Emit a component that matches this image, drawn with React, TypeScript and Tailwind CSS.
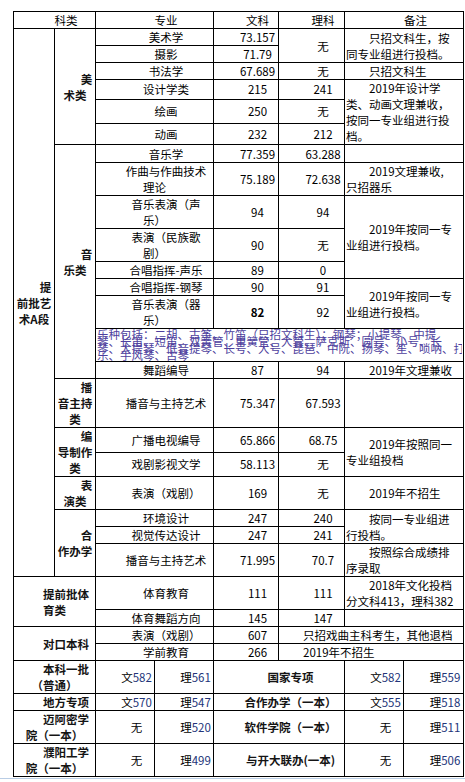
const td =
  "border border-black p-0 px-[1px] text-center indent-[2em] leading-[16px] align-middle whitespace-nowrap overflow-hidden";
const note =
  "border border-black p-0 px-[1px] text-left indent-[2em] leading-[16px] align-middle whitespace-nowrap overflow-hidden";
const head = `${td} font-bold text-[#141414]`;
const num = "text-[#23357a]";

const App = () => {
  return (
    <div className="min-h-[782px] bg-white pt-[11px] font-['Noto_Sans_CJK_SC','Noto_Sans',sans-serif] text-[11.5px] text-black">
      <table className="ml-[13px] w-[450px] table-fixed border-collapse">
        <colgroup>
          <col className="w-[41px]" />
          <col className="w-[41px]" />
          <col className="w-[59px]" />
          <col className="w-[59px]" />
          <col className="w-[65px]" />
          <col className="w-[66px]" />
          <col className="w-[59px]" />
          <col className="w-[60px]" />
        </colgroup>
        <tbody>
          <tr className="h-[17px]">
            <td colSpan={2} className={td}>科类</td>
            <td colSpan={2} className={td}>专业</td>
            <td className={td}>文科</td>
            <td className={td}>理科</td>
            <td colSpan={2} className={td}>备注</td>
          </tr>

          {/* 美术类 */}
          <tr className="h-[17px]">
            <td rowSpan={22} className={head}>
              提<br />前批艺<br />术A段
            </td>
            <td rowSpan={6} className={head}>
              美<br />术类
            </td>
            <td colSpan={2} className={td}>美术学</td>
            <td className={td}>73.157</td>
            <td rowSpan={2} className={td}>无</td>
            <td rowSpan={2} colSpan={2} className={note}>
              只招文科生，按<br />同专业组进行投档。
            </td>
          </tr>
          <tr className="h-[17px]">
            <td colSpan={2} className={td}>摄影</td>
            <td className={td}>71.79</td>
          </tr>
          <tr className="h-[17px]">
            <td colSpan={2} className={td}>书法学</td>
            <td className={td}>67.689</td>
            <td className={td}>无</td>
            <td colSpan={2} className={note}>只招文科生</td>
          </tr>
          <tr className="h-[19px]">
            <td colSpan={2} className={td}>设计学类</td>
            <td className={td}>215</td>
            <td className={td}>241</td>
            <td rowSpan={3} colSpan={2} className={note}>
              2019年设计学<br />类、动画文理兼收，<br />按同一专业组进行投<br />档。
            </td>
          </tr>
          <tr className="h-[24px]">
            <td colSpan={2} className={td}>绘画</td>
            <td className={td}>250</td>
            <td className={td}>无</td>
          </tr>
          <tr className="h-[20px]">
            <td colSpan={2} className={td}>动画</td>
            <td className={td}>232</td>
            <td className={td}>212</td>
          </tr>

          {/* 音乐类 */}
          <tr className="h-[18px]">
            <td rowSpan={9} className={head}>
              音<br />乐类
            </td>
            <td colSpan={2} className={td}>音乐学</td>
            <td className={td}>77.359</td>
            <td className={td}>63.288</td>
            <td colSpan={2} className={note}></td>
          </tr>
          <tr className="h-[31px]">
            <td colSpan={2} className={td}>
              作曲与作曲技术<br />理论
            </td>
            <td className={td}>75.189</td>
            <td className={td}>72.638</td>
            <td colSpan={2} className={note}>
              2019文理兼收,<br />只招器乐
            </td>
          </tr>
          <tr className="h-[32px]">
            <td colSpan={2} className={td}>
              音乐表演（声<br />乐）
            </td>
            <td className={td}>94</td>
            <td className={td}>94</td>
            <td rowSpan={3} colSpan={2} className={note}>
              2019年按同一专<br />业组进行投档。
            </td>
          </tr>
          <tr className="h-[32px]">
            <td colSpan={2} className={td}>
              表演（民族歌<br />剧）
            </td>
            <td className={td}>90</td>
            <td className={td}>无</td>
          </tr>
          <tr className="h-[17px]">
            <td colSpan={2} className={td}>合唱指挥-声乐</td>
            <td className={td}>89</td>
            <td className={td}>0</td>
          </tr>
          <tr className="h-[17px]">
            <td colSpan={2} className={td}>合唱指挥-钢琴</td>
            <td className={td}>90</td>
            <td className={td}>91</td>
            <td rowSpan={2} colSpan={2} className={note}>
              2019年按同一专<br />业组进行投档。
            </td>
          </tr>
          <tr className="h-[32px]">
            <td colSpan={2} className={td}>
              音乐表演（器<br />乐）
            </td>
            <td className={`${td} font-bold`}>82</td>
            <td className={td}>92</td>
          </tr>
          <tr className="h-[33px]">
            <td colSpan={6} className="overflow-hidden border border-black p-0 px-[1px] align-top">
              {/* crammed row: the lines run over each other as in the source page */}
              <div className="h-[32px] overflow-hidden whitespace-nowrap pt-[2px] text-left text-[11.5px] leading-[7px] text-[#4e3f9e]">
                乐种包括：二胡、古筝、竹笛（只招文科生）；钢琴；小提琴、中提
                <br />
                琴、长笛、短笛、双簧管、单簧管、大管、萨克斯、圆号、小号、长
                <br />
                琴、大提琴、低音提琴、长号、大号、琵琶、中阮、扬琴、笙、唢呐、打击
                <br />
                乐、手风琴、古琴
              </div>
            </td>
          </tr>
          <tr className="h-[16px]">
            <td colSpan={2} className={td}>舞蹈编导</td>
            <td className={td}>87</td>
            <td className={td}>94</td>
            <td colSpan={2} className={note}>2019年文理兼收</td>
          </tr>

          {/* 播音主持类 */}
          <tr className="h-[49px]">
            <td className={head}>
              播<br />音主持<br />类
            </td>
            <td colSpan={2} className={td}>播音与主持艺术</td>
            <td className={td}>75.347</td>
            <td className={td}>67.593</td>
            <td colSpan={2} className={note}></td>
          </tr>

          {/* 编导制作类 */}
          <tr className="h-[24px]">
            <td rowSpan={2} className={head}>
              编<br />导制作<br />类
            </td>
            <td colSpan={2} className={td}>广播电视编导</td>
            <td className={td}>65.866</td>
            <td className={td}>68.75</td>
            <td rowSpan={2} colSpan={2} className={note}>
              2019年按照同一<br />专业组投档
            </td>
          </tr>
          <tr className="h-[24px]">
            <td colSpan={2} className={td}>戏剧影视文学</td>
            <td className={td}>58.113</td>
            <td className={td}>无</td>
          </tr>

          {/* 表演类 */}
          <tr className="h-[32px]">
            <td className={head}>
              表<br />演类
            </td>
            <td colSpan={2} className={td}>表演（戏剧）</td>
            <td className={td}>169</td>
            <td className={td}>无</td>
            <td colSpan={2} className={note}>2019年不招生</td>
          </tr>

          {/* 合作办学 */}
          <tr className="h-[17px]">
            <td rowSpan={3} className={head}>
              合<br />作办学
            </td>
            <td colSpan={2} className={td}>环境设计</td>
            <td className={td}>247</td>
            <td className={td}>240</td>
            <td rowSpan={2} colSpan={2} className={note}>
              按同一专业组进<br />行投档。
            </td>
          </tr>
          <tr className="h-[17px]">
            <td colSpan={2} className={td}>视觉传达设计</td>
            <td className={td}>247</td>
            <td className={td}>241</td>
          </tr>
          <tr className="h-[32px]">
            <td colSpan={2} className={td}>播音与主持艺术</td>
            <td className={td}>71.995</td>
            <td className={td}>70.7</td>
            <td colSpan={2} className={note}>
              按照综合成绩排<br />序录取
            </td>
          </tr>

          {/* 提前批体育类 */}
          <tr className="h-[32px]">
            <td rowSpan={2} colSpan={2} className={head}>
              提前批体<br />育类
            </td>
            <td colSpan={2} className={td}>体育教育</td>
            <td className={td}>111</td>
            <td className={td}>111</td>
            <td colSpan={2} className={note}>
              2018年文化投档<br />分文科413，理科382
            </td>
          </tr>
          <tr className="h-[17px]">
            <td colSpan={2} className={td}>体育舞蹈方向</td>
            <td className={td}>145</td>
            <td className={td}>147</td>
            <td colSpan={2} className={note}></td>
          </tr>

          {/* 对口本科 */}
          <tr className="h-[17px]">
            <td rowSpan={2} colSpan={2} className={head}>对口本科</td>
            <td colSpan={2} className={td}>表演（戏剧）</td>
            <td className={td}>607</td>
            <td colSpan={3} className={note}>只招戏曲主科考生，其他退档</td>
          </tr>
          <tr className="h-[17px]">
            <td colSpan={2} className={td}>学前教育</td>
            <td className={td}>266</td>
            <td colSpan={3} className={note}>2019年不招生</td>
          </tr>

          {/* 一本线 */}
          <tr className="h-[33px]">
            <td colSpan={2} className={head}>
              本科一批<br />（普通）
            </td>
            <td className={td}>
              文<span className={num}>582</span>
            </td>
            <td className={td}>
              理<span className={num}>561</span>
            </td>
            <td colSpan={2} className={head}>国家专项</td>
            <td className={td}>
              文<span className={num}>582</span>
            </td>
            <td className={td}>
              理<span className={num}>559</span>
            </td>
          </tr>
          <tr className="h-[17px]">
            <td colSpan={2} className={head}>地方专项</td>
            <td className={td}>
              文<span className={num}>570</span>
            </td>
            <td className={td}>
              理<span className={num}>547</span>
            </td>
            <td colSpan={2} className={head}>合作办学（一本）</td>
            <td className={td}>
              文<span className={num}>555</span>
            </td>
            <td className={td}>
              理<span className={num}>518</span>
            </td>
          </tr>
          <tr className="h-[33px]">
            <td colSpan={2} className={head}>
              迈阿密学<br />院（一本）
            </td>
            <td className={td}>无</td>
            <td className={td}>
              理<span className={num}>520</span>
            </td>
            <td colSpan={2} className={head}>软件学院（一本）</td>
            <td className={td}>无</td>
            <td className={td}>
              理<span className={num}>511</span>
            </td>
          </tr>
          <tr className="h-[33px]">
            <td colSpan={2} className={head}>
              濮阳工学<br />院（一本）
            </td>
            <td className={td}>无</td>
            <td className={td}>
              理<span className={num}>499</span>
            </td>
            <td colSpan={2} className={head}>与开大联办(一本)</td>
            <td className={td}>无</td>
            <td className={td}>
              理<span className={num}>506</span>
            </td>
          </tr>
        </tbody>
      </table>
      <div className="mt-[1px] h-[1px] w-full bg-[#b9cde5]" />
    </div>
  );
};

export default App;
